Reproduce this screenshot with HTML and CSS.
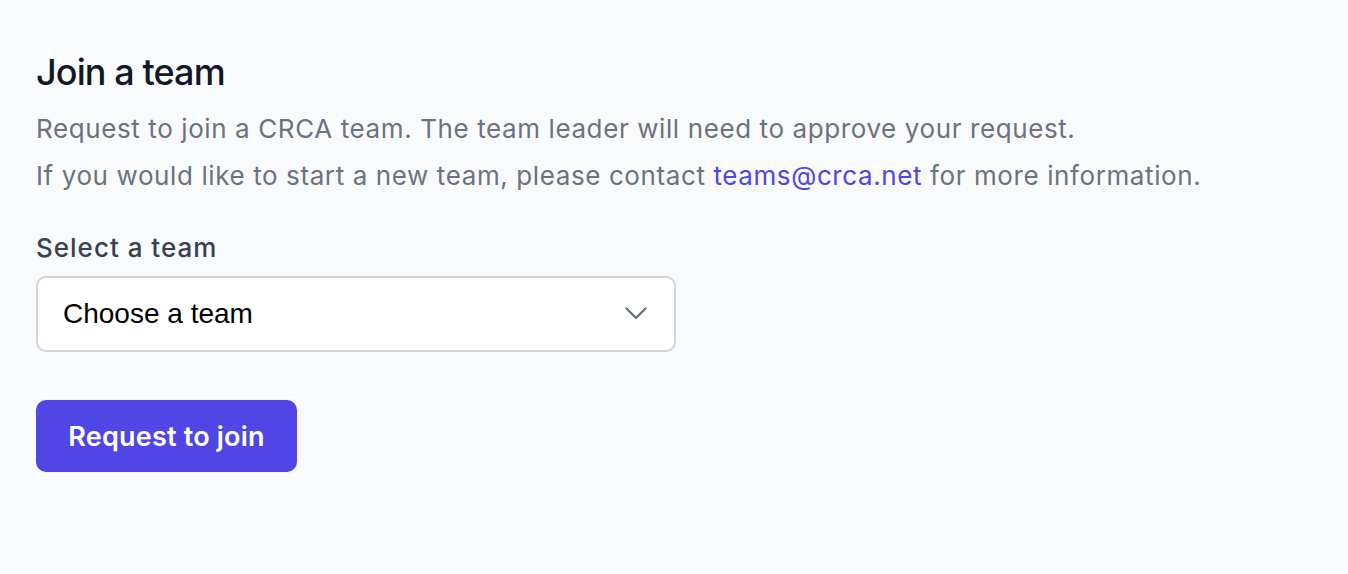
FILE: index.html
```html
<!DOCTYPE html>
<html>
<head>
    <meta name="viewport" content="width=device-width, initial-scale=1">
    <link rel="stylesheet" href="styles.css">
</head>

<body>
    <div class="page">
        <h1 class="title">Join a team</h1>
        <p class="intro">Request to join a CRCA team. The team leader will need to approve your request.</p>
        <p class="intro">If you would like to start a new team, please contact <a href="#" class="mail">teams@crca.net</a> for more information.</p>

        <form class="joinForm">
            <label class="fieldLabel" for="team">Select a team</label>
            <div class="selectBox">
                <span class="selectText">Choose a team</span>
                <svg class="chevron" width="22" height="14" viewBox="0 0 22 14" fill="none">
                    <path d="M1.5 1.5L11 11L20.5 1.5" stroke="#6b7280" stroke-width="2.4" stroke-linecap="round" stroke-linejoin="round"/>
                </svg>
            </div>
            <button type="button" class="joinButton">Request to join</button>
        </form>
    </div>
</body>
</html>
```

FILE: styles.css
```css
body {
    margin: 0;
    background-color: #f9fafb;
    font-family: Inter, "Noto Sans", sans-serif;
}

.page {
    padding: 52px 36px;
}

.title {
    margin: 0 0 19px 0;
    font-size: 36px;
    font-weight: 500;
    line-height: 40px;
    letter-spacing: -0.9px;
    color: #111827;
}

.intro {
    margin: 0 0 11px 0;
    font-size: 26px;
    line-height: 36px;
    letter-spacing: 0.6px;
    color: #6b7280;
}

.mail {
    color: #4f46e5;
    text-decoration: none;
}

.joinForm {
    display: flex;
    flex-direction: column;
    align-items: flex-start;
    margin-top: 36px;
}

.fieldLabel {
    font-size: 26px;
    font-weight: 500;
    line-height: 36px;
    letter-spacing: 1px;
    color: #374151;
    margin-bottom: 10px;
}

.selectBox {
    box-sizing: border-box;
    width: 640px;
    height: 76px;
    display: flex;
    align-items: center;
    justify-content: space-between;
    padding: 0 27px 0 25px;
    background: #ffffff;
    border: 2px solid #d1d5db;
    border-radius: 10px;
}

.selectText {
    font-family: "Liberation Sans", Arial, sans-serif;
    font-size: 28px;
    color: #000000;
}

.joinButton {
    margin-top: 48px;
    width: 261px;
    height: 72px;
    border: none;
    border-radius: 10px;
    background-color: #4f46e5;
    color: #ffffff;
    font-family: Inter, sans-serif;
    font-size: 27px;
    font-weight: 600;
    letter-spacing: 0.2px;
    cursor: pointer;
}
```
